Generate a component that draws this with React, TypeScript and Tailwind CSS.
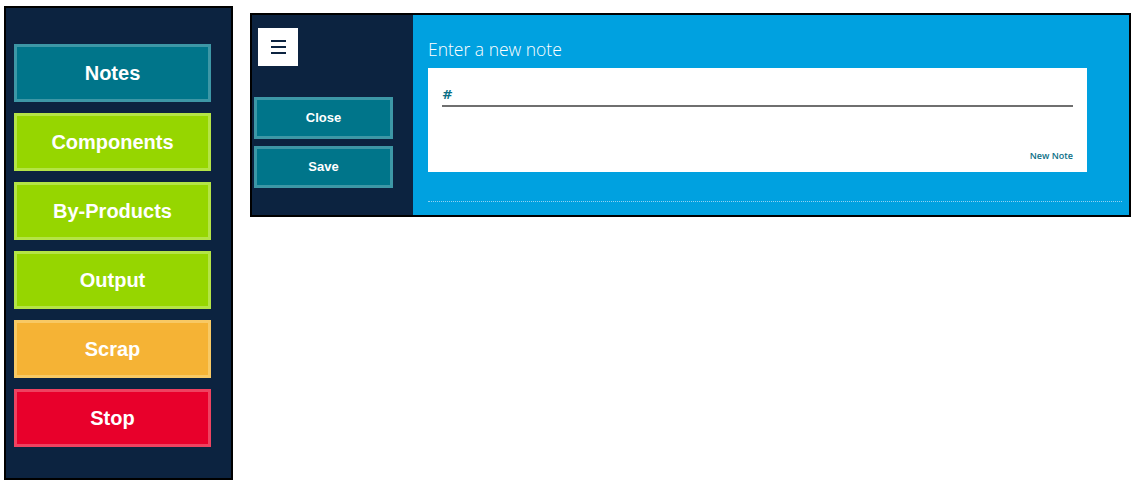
import React from 'react';

const sideButtons = [
  { label: 'Notes', cls: 'bg-[#00758a] border-[#3d97a6]' },
  { label: 'Components', cls: 'bg-[#96d600] border-[#b4e446]' },
  { label: 'By-Products', cls: 'bg-[#96d600] border-[#b4e446]' },
  { label: 'Output', cls: 'bg-[#96d600] border-[#b4e446]' },
  { label: 'Scrap', cls: 'bg-[#f5b335] border-[#f8c964]' },
  { label: 'Stop', cls: 'bg-[#e8002b] border-[#ef4260]' },
];

export default function App() {
  return (
    <div className="w-[1142px] h-[488px] bg-white flex items-start font-['Liberation_Sans',Arial,sans-serif]">
      {/* Left menu */}
      <div className="ml-[4px] mt-[6px] w-[229px] h-[474px] border-2 border-black bg-[#0c2340] pl-[8px] pt-[36px] flex flex-col gap-[11px]">
        {sideButtons.map(b => (
          <button key={b.label}
            className={`w-[197px] h-[58px] border-[3px] ${b.cls} text-white font-bold text-[20px] flex items-center justify-center`}>
            {b.label}
          </button>
        ))}
      </div>

      {/* Note editor */}
      <div className="ml-[17px] mt-[13px] w-[881px] h-[204px] border-2 border-black flex">
        <div className="w-[161px] bg-[#0c2340] flex flex-col">
          <div className="ml-[6px] mt-[13px] w-[40px] h-[38px] bg-white flex flex-col items-center justify-center gap-[4px]">
            <span className="block w-[15px] h-[2px] bg-[#0c2340]" />
            <span className="block w-[15px] h-[2px] bg-[#0c2340]" />
            <span className="block w-[15px] h-[2px] bg-[#0c2340]" />
          </div>
          <div className="ml-[2px] mt-[31px] flex flex-col gap-[7px]">
            <button className="w-[139px] h-[42px] bg-[#00758a] border-[3px] border-[#3d97a6] text-white font-bold text-[13px] flex items-center justify-center">Close</button>
            <button className="w-[139px] h-[42px] bg-[#00758a] border-[3px] border-[#3d97a6] text-white font-bold text-[13px] flex items-center justify-center">Save</button>
          </div>
        </div>
        <div className="flex-1 bg-[#00a1e0] pl-[15px] pr-[7px] font-['Open_Sans','Noto_Sans',sans-serif]">
          <div className="mt-[22px] h-[24px] text-white text-[17.5px] font-light leading-[24px]">Enter a new note</div>
          <div className="mt-[7px] w-[659px] h-[104px] bg-white px-[14px] pt-[17px] flex flex-col">
            <div className="h-[22px] border-b-2 border-[#6f6f6f] text-[#0b6f86] font-bold text-[13px] leading-[20px] font-['DejaVu_Sans',sans-serif]">#</div>
            <div className="mt-auto mb-[10px] self-end text-[9px] font-semibold text-[#0b6f86] leading-[12px]">New Note</div>
          </div>
          <div className="mt-[29px] border-t border-dotted border-[#8fd2f2]" />
        </div>
      </div>
    </div>
  );
}
